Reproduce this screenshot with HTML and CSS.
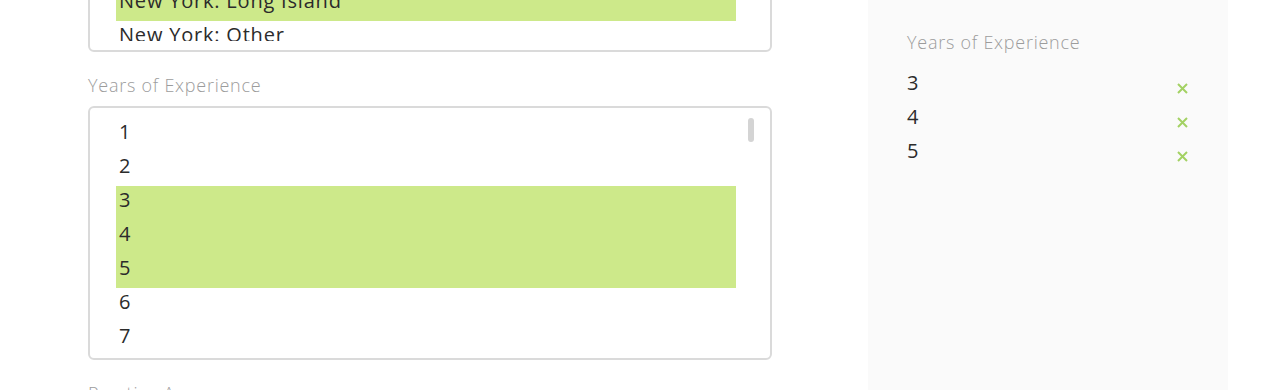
FILE: index.html
```html
<!DOCTYPE html>
<html lang="en">
  <head>
    <meta charset="UTF-8" />
    <meta name="viewport" content="width=device-width, initial-scale=1.0" />
    <title>Filters</title>
    <link rel="stylesheet" href="styles.css">
  </head>
  <body>
    <div class="page">
      <div class="form-col">
        <div class="select top-select">
          <ul class="options shifted">
            <li>New Hampshire</li>
            <li>New Jersey</li>
            <li>New Mexico</li>
            <li>New York: Brooklyn</li>
            <li>New York: Hudson Valley</li>
            <li>New York: Manhattan</li>
            <li class="selected">New York: Long Island</li>
            <li>New York: Other</li>
          </ul>
        </div>

        <label class="field-label">Years of Experience</label>
        <div class="select">
          <ul class="options">
            <li>1</li>
            <li>2</li>
            <li class="selected">3</li>
            <li class="selected">4</li>
            <li class="selected">5</li>
            <li>6</li>
            <li>7</li>
            <li>8</li>
            <li>9</li>
            <li>10</li>
          </ul>
          <div class="thumb"></div>
        </div>

        <label class="field-label">Practice Areas</label>
      </div>

      <div class="summary">
        <div class="field-label">Years of Experience</div>
        <ul class="chosen">
          <li>
            <span>3</span>
            <svg class="remove" width="11" height="11" viewBox="0 0 11 11"><path d="M1 1L10 10M10 1L1 10" /></svg>
          </li>
          <li>
            <span>4</span>
            <svg class="remove" width="11" height="11" viewBox="0 0 11 11"><path d="M1 1L10 10M10 1L1 10" /></svg>
          </li>
          <li>
            <span>5</span>
            <svg class="remove" width="11" height="11" viewBox="0 0 11 11"><path d="M1 1L10 10M10 1L1 10" /></svg>
          </li>
        </ul>
      </div>
    </div>
  </body>
</html>
```

FILE: styles.css
```css
body {
  margin: 0;
  font-family: "Open Sans", Lato, sans-serif;
  color: #2b2b2b;
  background: #fff;
  overflow: hidden;
}
ul {
  list-style: none;
  margin: 0;
  padding: 0;
}
.page {
  display: flex;
  align-items: flex-start;
  height: 390px;
}
.form-col {
  width: 684px;
  margin-left: 88px;
  margin-top: -206px;
}
.field-label {
  display: block;
  font-size: 18px;
  font-weight: 300;
  letter-spacing: 0.75px;
  color: #9c9c9c;
  line-height: 24px;
}
.form-col .field-label {
  margin: 21px 0 9px;
}

/* !--- SELECT BOXES ------ */
.select {
  position: relative;
  border: 2px solid #dadada;
  border-radius: 6px;
  padding: 10px 34px 2px 26px;
  height: 238px;
}
.top-select {
  padding-bottom: 9px;
  height: 235px;
}
.top-select .options {
  height: 235px;
}
.options {
  height: 238px;
  overflow: hidden;
}
.options li {
  font-size: 20px;
  letter-spacing: 0.8px;
  line-height: 26px;
  height: 26px;
  padding: 1px 0 7px 3px;
  white-space: nowrap;
}
.options.shifted li:first-child {
  margin-top: -23px;
}
.options .selected {
  background-color: #cde98a;
}
.thumb {
  position: absolute;
  top: 10px;
  right: 16px;
  width: 6px;
  height: 24px;
  border-radius: 3px;
  background: #d4d4d4;
}

/* !--- SUMMARY PANEL ------ */
.summary {
  margin-left: 96px;
  width: 281px;
  height: 360px;
  padding: 30px 40px 0 39px;
  background: #fafafa;
}
.chosen {
  margin-top: 16px;
}
.chosen li {
  display: flex;
  justify-content: space-between;
  align-items: flex-start;
  font-size: 20px;
  line-height: 26px;
  height: 26px;
  padding-bottom: 8px;
}
.remove {
  margin-top: 13px;
  stroke: #a3d163;
  stroke-width: 2;
  fill: none;
}
```
